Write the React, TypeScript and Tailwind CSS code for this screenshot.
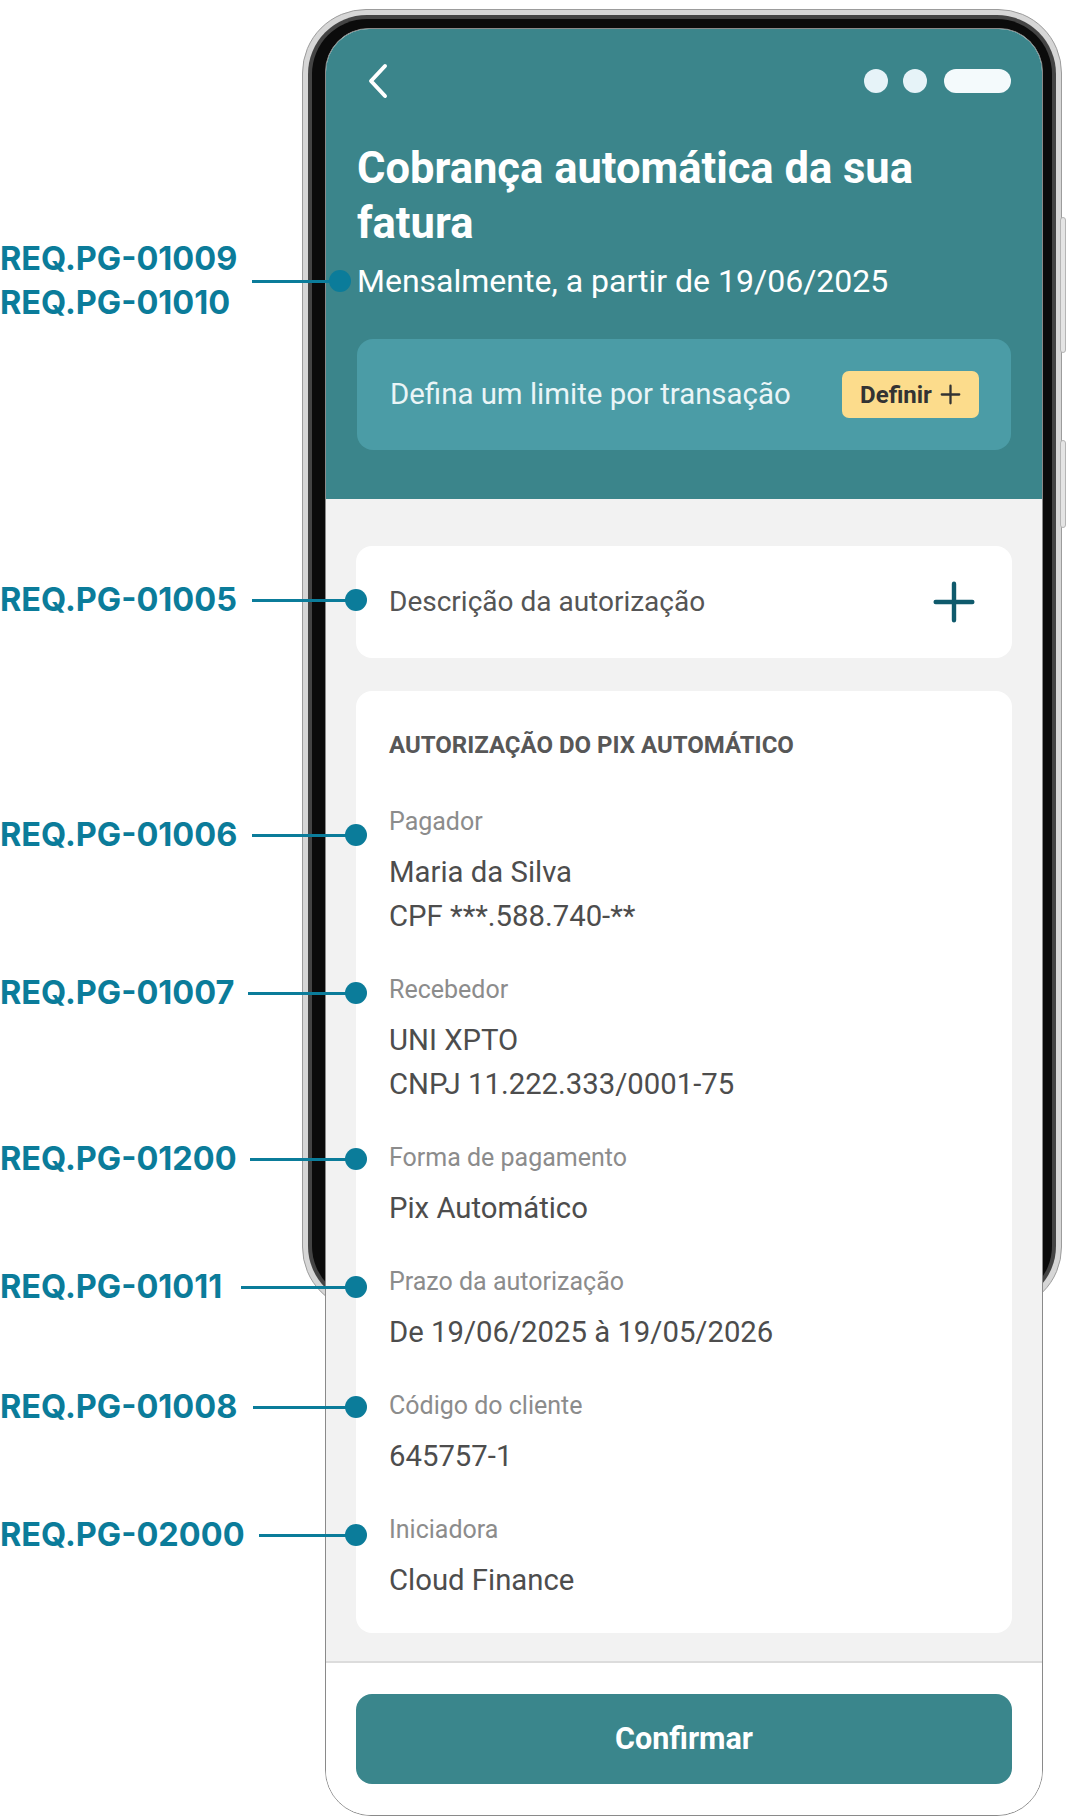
type Note = { ids: string[]; y: number; from: number; dot: number };

const notes: Note[] = [
  { ids: ['REQ.PG-01009', 'REQ.PG-01010'], y: 281, from: 252, dot: 340 },
  { ids: ['REQ.PG-01005'], y: 600, from: 252, dot: 356 },
  { ids: ['REQ.PG-01006'], y: 835, from: 252, dot: 356 },
  { ids: ['REQ.PG-01007'], y: 993, from: 248, dot: 356 },
  { ids: ['REQ.PG-01200'], y: 1159, from: 250, dot: 356 },
  { ids: ['REQ.PG-01011'], y: 1287, from: 241, dot: 356 },
  { ids: ['REQ.PG-01008'], y: 1407, from: 253, dot: 356 },
  { ids: ['REQ.PG-02000'], y: 1535, from: 259, dot: 356 },
];

const fields = [
  { label: 'Pagador', values: ['Maria da Silva', 'CPF ***.588.740-**'] },
  { label: 'Recebedor', values: ['UNI XPTO', 'CNPJ 11.222.333/0001-75'] },
  { label: 'Forma de pagamento', values: ['Pix Automático'] },
  { label: 'Prazo da autorização', values: ['De 19/06/2025 à 19/05/2026'] },
  { label: 'Código do cliente', values: ['645757-1'] },
  { label: 'Iniciadora', values: ['Cloud Finance'] },
];

function Plus({ className, stroke }: { className: string; stroke: number }) {
  return (
    <svg viewBox="0 0 24 24" className={className} fill="none" stroke="currentColor" strokeWidth={stroke} strokeLinecap="round">
      <path d="M12 2v20M2 12h20" />
    </svg>
  );
}

function PhoneFrame() {
  return (
    <>
      <div className="absolute left-[302px] top-[9px] w-[760px] h-[1302px] rounded-[64px] bg-[#d6d6d6] border border-[#9c9c9c] z-0">
        <div className="absolute inset-[5px] rounded-[59px] bg-[#444444]">
          <div className="absolute inset-[4px] rounded-[55px] bg-[#0b0b0b]" />
        </div>
      </div>
      <div className="absolute left-[1060px] top-[217px] w-[6px] h-[136px] rounded-[3px] bg-[#e4e4e4] border border-[#b4b4b4] z-0" />
      <div className="absolute left-[1060px] top-[440px] w-[6px] h-[88px] rounded-[3px] bg-[#e4e4e4] border border-[#b4b4b4] z-0" />
    </>
  );
}

function Annotations() {
  return (
    <>
      {notes.map((n) => (
        <div key={n.ids[0]} className="absolute inset-0 z-20 pointer-events-none">
          <div
            className="absolute left-0 font-['Inter',sans-serif] font-bold text-[32.5px] leading-[44px] text-[#0b7c9a]"
            style={{ top: n.y - (n.ids.length * 44) / 2 }}
          >
            {n.ids.map((id) => (
              <div key={id}>{id}</div>
            ))}
          </div>
          <div className="absolute h-[3px] bg-[#0b7c9a]" style={{ left: n.from, width: n.dot - n.from, top: n.y - 1.5 }} />
          <div className="absolute w-[22px] h-[22px] rounded-full bg-[#0b7c9a]" style={{ left: n.dot - 11, top: n.y - 11 }} />
        </div>
      ))}
    </>
  );
}

export default function App() {
  return (
    <div className="relative w-[1066px] h-[1818px] bg-white overflow-hidden pt-[28px] font-['Roboto',sans-serif]">
      <PhoneFrame />

      <div className="relative z-10 ml-[325px] w-[718px] rounded-t-[44px] rounded-b-[46px] border border-[#8a8a8a] overflow-hidden bg-white flex flex-col">
        <header className="bg-[#3b858b] px-[31px] pt-[36px] pb-[49px] text-white">
          <div className="flex items-center justify-between h-[32px]">
            <svg viewBox="0 0 24 36" className="w-[24px] h-[36px] ml-[9px]" fill="none" stroke="currentColor" strokeWidth={4} strokeLinecap="round" strokeLinejoin="round">
              <path d="M19 3 L5 18 L19 33" />
            </svg>
            <div className="flex items-center">
              <span className="w-[24px] h-[24px] rounded-full bg-[#e6f3f8]" />
              <span className="ml-[15px] w-[24px] h-[24px] rounded-full bg-[#e6f3f8]" />
              <span className="ml-[17px] w-[67px] h-[24px] rounded-full bg-[#f4fafc]" />
            </div>
          </div>
          <h1 className="mt-[44px] text-[43.5px] leading-[55px] font-bold pr-[40px]">Cobrança automática da sua fatura</h1>
          <p className="mt-[10px] text-[32px] leading-[40px]">Mensalmente, a partir de 19/06/2025</p>
          <div className="mt-[38px] h-[111px] rounded-[16px] bg-[#4b9ca6] pl-[33px] pr-[32px] flex items-center justify-between">
            <span className="text-[29.4px] text-[#eaf5f7]">Defina um limite por transação</span>
            <button className="h-[47px] w-[137px] rounded-[7px] bg-[#fcdc8c] flex items-center justify-center gap-[8px] text-[#333333]">
              <span className="text-[24px] font-bold">Definir</span>
              <Plus className="w-[21px] h-[21px]" stroke={2.6} />
            </button>
          </div>
        </header>

        <main className="bg-[#f2f2f2] px-[30px] pt-[47px] pb-[28px] flex flex-col gap-[33px]">
          <div className="h-[112px] rounded-[16px] bg-white pl-[33px] pr-[36px] flex items-center justify-between">
            <span className="text-[28px] text-[#555555]">Descrição da autorização</span>
            <Plus className="w-[44px] h-[44px] text-[#0f5a6c]" stroke={2.4} />
          </div>

          <section className="rounded-[16px] bg-white px-[33px] pt-[41px] pb-[31px]">
            <h2 className="text-[24px] leading-[26px] font-bold text-[#575757] mb-[50px]">AUTORIZAÇÃO DO PIX AUTOMÁTICO</h2>
            <div className="flex flex-col gap-[38px]">
              {fields.map((f) => (
                <div key={f.label}>
                  <div className="text-[25px] leading-[28px] text-[#8c8c8c]">{f.label}</div>
                  <div className="mt-[14px]">
                    {f.values.map((v) => (
                      <div key={v} className="text-[29.3px] leading-[44px] text-[#4d4d4d]">{v}</div>
                    ))}
                  </div>
                </div>
              ))}
            </div>
          </section>
        </main>

        <footer className="border-t-2 border-[#dcdcdc] bg-white px-[30px] pt-[31px] pb-[31px]">
          <button className="w-full h-[90px] rounded-[16px] bg-[#3a868c] text-white text-[30.5px] font-bold">Confirmar</button>
        </footer>
      </div>

      <Annotations />
    </div>
  );
}
